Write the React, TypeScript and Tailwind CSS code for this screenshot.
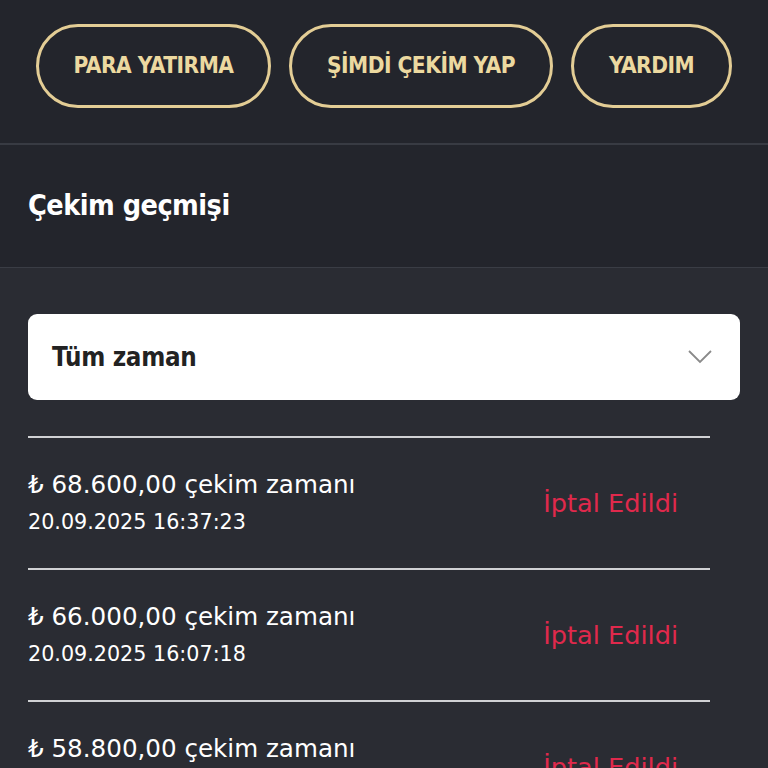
import React from 'react';

const rows = [
  { amount: '68.600,00', date: '20.09.2025 16:37:23' },
  { amount: '66.000,00', date: '20.09.2025 16:07:18' },
  { amount: '58.800,00', date: '20.09.2025 15:41:02' },
];

export default function App() {
  return (
    <div className="w-[768px] h-[768px] overflow-hidden bg-[#2a2c33] font-['DejaVu_Sans',sans-serif]">
      {/* Action buttons */}
      <div className="bg-[#23252c] h-[145px] flex items-start justify-center gap-[18px] pt-[24px] border-b-2 border-[#383b43]">
        <button className="h-[84px] w-[235px] rounded-full border-[3px] border-[#e3cd95] text-[#ecd9a0] font-['DejaVu_Sans_Condensed','DejaVu_Sans',sans-serif] font-bold text-[22.5px] tracking-[-0.5px]">
          PARA YATIRMA
        </button>
        <button className="h-[84px] w-[264px] rounded-full border-[3px] border-[#e3cd95] text-[#ecd9a0] font-['DejaVu_Sans_Condensed','DejaVu_Sans',sans-serif] font-bold text-[22.5px] tracking-[-0.5px]">
          ŞİMDİ ÇEKİM YAP
        </button>
        <button className="h-[84px] w-[161px] rounded-full border-[3px] border-[#e3cd95] text-[#ecd9a0] font-['DejaVu_Sans_Condensed','DejaVu_Sans',sans-serif] font-bold text-[22.5px] tracking-[-0.5px]">
          YARDIM
        </button>
      </div>

      {/* Section title */}
      <div className="bg-[#23252c] h-[123px] flex items-center px-[28px] border-b border-[#3a3d45]">
        <h2 className="text-white font-bold text-[28.5px] font-['DejaVu_Sans_Condensed','DejaVu_Sans',sans-serif] tracking-[-0.5px]">
          Çekim geçmişi
        </h2>
      </div>

      <div className="px-[28px] pt-[46px]">
        {/* Period select */}
        <div className="h-[86px] w-[712px] bg-white rounded-[9px] flex items-center justify-between pl-[24px] pr-[28px]">
          <span className="text-[#222] font-bold text-[25.7px] font-['DejaVu_Sans_Condensed','DejaVu_Sans',sans-serif] tracking-[-0.3px]">
            Tüm zaman
          </span>
          <svg width="24" height="14" viewBox="0 0 24 14" fill="none" stroke="#8a8a8a" strokeWidth="1.8">
            <path d="M1 1l11 11L23 1" />
          </svg>
        </div>

        {/* History list */}
        <div className="mt-[36px] w-[682px]">
          {rows.map((r) => (
            <div key={r.date} className="border-t-2 border-[#d0d1d4] h-[132px] flex items-center justify-between pr-[32px]">
              <div className="flex flex-col gap-[10px] -mt-[2px]">
                <span className="text-white text-[24.6px] leading-[30px]">
                  ₺ {r.amount} çekim zamanı
                </span>
                <span className="text-white text-[20.7px] leading-[24px]">
                  {r.date}
                </span>
              </div>
              <span className="text-[#e0294c] text-[25.6px]">
                İptal Edildi
              </span>
            </div>
          ))}
        </div>
      </div>
    </div>
  );
}
